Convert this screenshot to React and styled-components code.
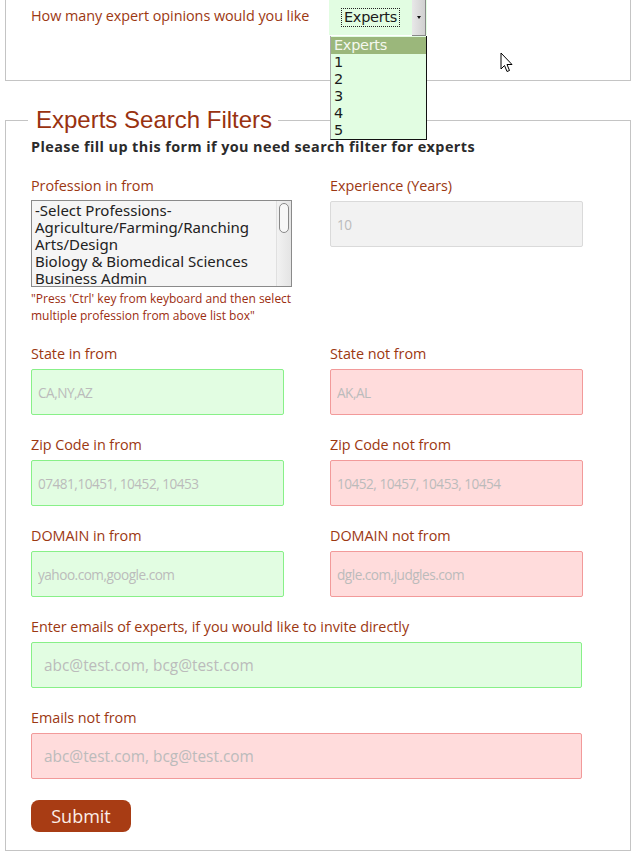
import React from 'react'
import styled, { createGlobalStyle } from 'styled-components'

const GlobalStyle = createGlobalStyle`
  body {
    margin: 0;
    background: #fff;
    font-family: 'Open Sans', 'Noto Sans', sans-serif;
  }
`

const Page = styled.div`
  position: relative;
  width: 636px;
  height: 856px;
  overflow: hidden;
  padding: 0 5px;
  box-sizing: border-box;
`

const TopPanel = styled.div`
  position: relative;
  height: 81px;
  border: 1px solid #c4c4c4;
  border-top: none;
  box-sizing: border-box;
  display: flex;
  align-items: flex-start;
  padding-left: 25px;
`

const Label = styled.div`
  color: #9c3812;
  font-size: 14.4px;
  line-height: 20px;
  margin-bottom: 5px;
  letter-spacing: -0.05px;
`

const TopLabel = styled(Label)`
  width: 298px;
  margin-top: 6px;
`

const ExpertSelect = styled.div`
  position: relative;
  width: 98px;
  height: 35px;
  background: #e2fde2;
  display: flex;
  align-items: center;
`

const SelectValue = styled.span`
  margin-left: 12px;
  padding: 0 2px;
  border: 1px dotted #222;
  font-size: 14.5px;
  line-height: 17px;
  color: #1a1a1a;
  font-family: 'DejaVu Sans', sans-serif;
  letter-spacing: -0.3px;
`

const ArrowButton = styled.div`
  position: absolute;
  right: 1px;
  top: 0;
  width: 13px;
  height: 35px;
  background: linear-gradient(90deg, #e8e8e8, #d0d0d0);
  border-right: 1px solid #888;
  border-bottom: 1px solid #888;
  display: flex;
  align-items: center;
  justify-content: center;
  &::after {
    content: '';
    border-left: 2.5px solid transparent;
    border-right: 2.5px solid transparent;
    border-top: 3px solid #111;
  }
`

const DropList = styled.ul`
  position: absolute;
  left: 330px;
  top: 36px;
  width: 97px;
  margin: 0;
  padding: 1px 0 0;
  list-style: none;
  background: #e2fde2;
  border-left: 1px solid #aaa;
  border-right: 1px solid #111;
  border-bottom: 1px solid #111;
  box-sizing: border-box;
  z-index: 5;
`

const DropItem = styled.li`
  height: 17px;
  line-height: 17px;
  padding-left: 3px;
  font-size: 14.5px;
  font-family: 'DejaVu Sans', sans-serif;
  letter-spacing: -0.3px;
  color: ${p => (p.active ? '#f4f8ee' : '#1a1a1a')};
  background: ${p => (p.active ? '#9bb77b' : 'transparent')};
`

const Cursor = styled.svg`
  position: absolute;
  left: 500px;
  top: 52px;
  z-index: 6;
`

const Fieldset = styled.fieldset`
  margin: 25px 0 0;
  padding: 0 25px 18px;
  border: 1px solid #c4c4c4;
  min-width: 0;
`

const Legend = styled.legend`
  margin-left: -3px;
  padding: 0 6px 0 8px;
  font-family: 'Liberation Sans', Arial, sans-serif;
  font-size: 24px;
  line-height: 28px;
  color: #993210;
`

const Intro = styled.div`
  font-weight: 700;
  font-size: 14.4px;
  line-height: 19px;
  color: #2b2b2b;
  letter-spacing: 0.42px;
  margin: 3px 0 20px;
`

const Rows = styled.div`
  display: flex;
  flex-direction: column;
  gap: 20px;
`

const Row = styled.div`
  display: grid;
  grid-template-columns: 253px 253px;
  column-gap: 46px;
`

const Field = styled.div`
  display: flex;
  flex-direction: column;
`

const Input = styled.input`
  box-sizing: border-box;
  width: ${p => (p.wide ? '551px' : '253px')};
  height: 46px;
  padding: 0 ${p => (p.wide ? '12px' : '6px')};
  border-radius: 2px;
  font-family: 'Open Sans', sans-serif;
  font-size: ${p => (p.wide ? '15.4px' : '13.6px')};
  letter-spacing: ${p => (p.wide ? '0' : '-0.5px')};
  outline: none;
  border: 1px solid
    ${p => (p.tone === 'green' ? '#88f088' : p.tone === 'red' ? '#f29a9a' : '#dadada')};
  background: ${p =>
    p.tone === 'green' ? '#e2fde2' : p.tone === 'red' ? '#ffdcdc' : '#f2f2f2'};
  &::placeholder {
    color: #bbbbbb;
  }
`

const ListBox = styled.div`
  box-sizing: border-box;
  width: 261px;
  height: 87px;
  margin-top: -1px;
  border: 1px solid #8a8a8a;
  background: #f5f5f5;
  display: flex;
  overflow: hidden;
`

const ListItems = styled.div`
  flex: 1;
  padding: 1px 0 0 3px;
`

const ListItem = styled.div`
  font-family: 'Noto Sans', sans-serif;
  font-size: 15px;
  line-height: 17px;
  color: #222;
  white-space: nowrap;
`

const ScrollTrack = styled.div`
  width: 15px;
  background: linear-gradient(90deg, #f2f2f2, #e4e4e4);
  border-left: 1px solid #e0e0e0;
  padding: 2px 2px;
  box-sizing: border-box;
`

const ScrollThumb = styled.div`
  height: 28px;
  border: 1px solid #888;
  border-radius: 5px;
  background: #f7f7f7;
`

const Note = styled.div`
  width: 272px;
  margin-top: 3px;
  color: #9c2d10;
  font-size: 12px;
  line-height: 17px;
`

const SubmitButton = styled.button`
  align-self: flex-start;
  margin-top: 1px;
  width: 100px;
  height: 32px;
  border: none;
  border-radius: 8px;
  background: #a83c14;
  color: #fbeee8;
  font-family: 'Open Sans', sans-serif;
  font-size: 18px;
  padding: 0;
`

const professions = [
  '-Select Professions-',
  'Agriculture/Farming/Ranching',
  'Arts/Design',
  'Biology & Biomedical Sciences',
  'Business Admin'
]

const pairs = [
  { left: 'State in from', right: 'State not from', lp: 'CA,NY,AZ', rp: 'AK,AL' },
  {
    left: 'Zip Code in from',
    right: 'Zip Code not from',
    lp: '07481,10451, 10452, 10453',
    rp: '10452, 10457, 10453, 10454'
  },
  {
    left: 'DOMAIN in from',
    right: 'DOMAIN not from',
    lp: 'yahoo.com,google.com',
    rp: 'dgle.com,judgles.com'
  }
]

export default function App() {
  return (
    <Page>
      <GlobalStyle />
      <TopPanel>
        <TopLabel>How many expert opinions would you like</TopLabel>
        <ExpertSelect>
          <SelectValue>Experts</SelectValue>
          <ArrowButton />
        </ExpertSelect>
      </TopPanel>
      <DropList>
        {['Experts', '1', '2', '3', '4', '5'].map((o, i) => (
          <DropItem key={o} active={i === 0}>
            {o}
          </DropItem>
        ))}
      </DropList>
      <Cursor width="14" height="22" viewBox="0 0 14 22">
        <path
          d="M1 1 L1 17 L4.5 13.5 L7 19.5 L9.5 18.5 L7 12.5 L12 12.5 Z"
          fill="#fff"
          stroke="#000"
          strokeWidth="1"
          strokeLinejoin="round"
        />
      </Cursor>

      <Fieldset>
        <Legend>Experts Search Filters</Legend>
        <Intro>Please fill up this form if you need search filter for experts</Intro>
        <Rows>
          <Row>
            <Field>
              <Label>Profession in from</Label>
              <ListBox>
                <ListItems>
                  {professions.map(p => (
                    <ListItem key={p}>{p}</ListItem>
                  ))}
                </ListItems>
                <ScrollTrack>
                  <ScrollThumb />
                </ScrollTrack>
              </ListBox>
              <Note>
                "Press 'Ctrl' key from keyboard and then select multiple profession from above
                list box"
              </Note>
            </Field>
            <Field>
              <Label>Experience (Years)</Label>
              <Input placeholder="10" />
            </Field>
          </Row>
          {pairs.map(r => (
            <Row key={r.left}>
              <Field>
                <Label>{r.left}</Label>
                <Input tone="green" placeholder={r.lp} />
              </Field>
              <Field>
                <Label>{r.right}</Label>
                <Input tone="red" placeholder={r.rp} />
              </Field>
            </Row>
          ))}
          <Field>
            <Label>Enter emails of experts, if you would like to invite directly</Label>
            <Input wide tone="green" placeholder="abc@test.com, bcg@test.com" />
          </Field>
          <Field>
            <Label>Emails not from</Label>
            <Input wide tone="red" placeholder="abc@test.com, bcg@test.com" />
          </Field>
          <SubmitButton>Submit</SubmitButton>
        </Rows>
      </Fieldset>
    </Page>
  )
}
